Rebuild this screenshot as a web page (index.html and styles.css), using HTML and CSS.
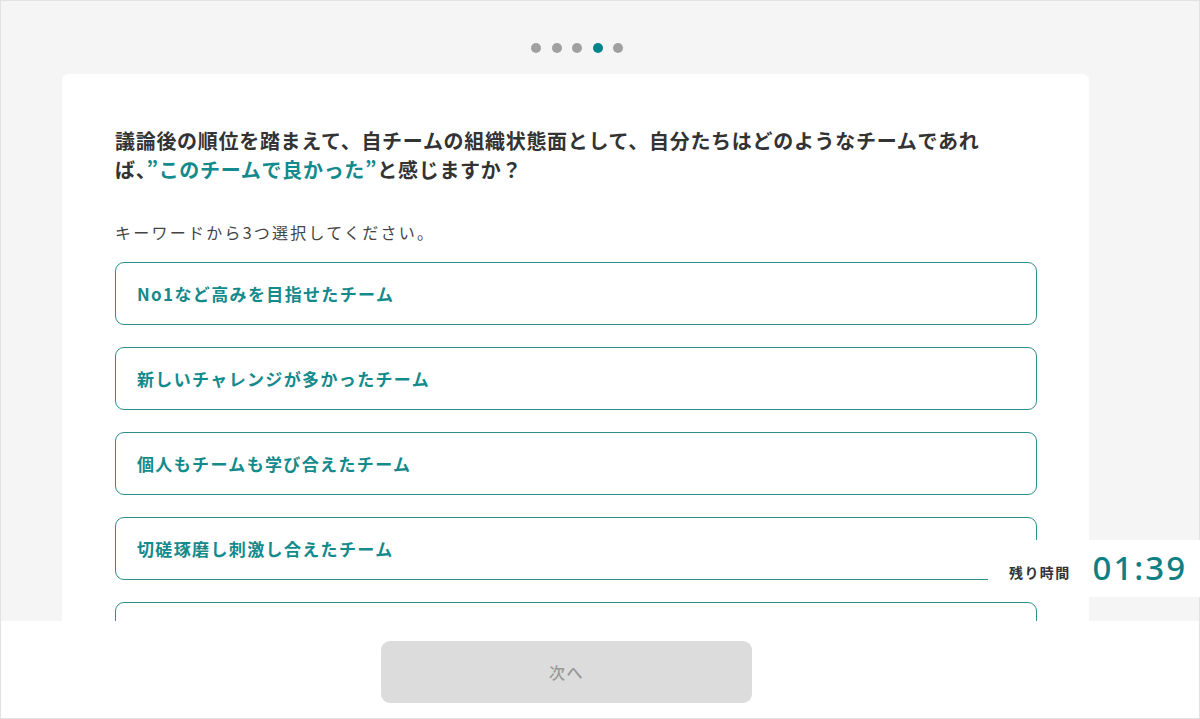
FILE: index.html
```html
<!DOCTYPE html>
<html lang="ja">
<head>
<meta charset="utf-8">
<title>質問</title>
<link rel="stylesheet" href="styles.css">
</head>
<body>
<div class="frame">
  <main class="main">
    <div class="dots">
      <span class="dot"></span>
      <span class="dot"></span>
      <span class="dot"></span>
      <span class="dot active"></span>
      <span class="dot"></span>
    </div>
    <section class="card">
      <h1 class="question">議論後の順位を踏まえて、自チームの組織状態面として、自分たちはどのようなチームであれば、<span class="accent">”このチームで良かった”</span>と感じますか？</h1>
      <p class="hint">キーワードから3つ選択してください。</p>
      <ul class="options">
        <li class="option">No1など高みを目指せたチーム</li>
        <li class="option">新しいチャレンジが多かったチーム</li>
        <li class="option">個人もチームも学び合えたチーム</li>
        <li class="option">切磋琢磨し刺激し合えたチーム</li>
        <li class="option">一体感のあるチーム</li>
      </ul>
    </section>
  </main>
  <footer class="footer">
    <button class="next" type="button">次へ</button>
  </footer>
  <div class="timer">
    <span class="timer-label">残り時間</span>
    <span class="timer-value">01:39</span>
  </div>
</div>
</body>
</html>
```
FILE: styles.css
```css
* { box-sizing: border-box; }
html, body { margin: 0; padding: 0; }
body {
  width: 1200px;
  height: 719px;
  overflow: hidden;
  font-family: "Noto Sans CJK JP", "Noto Sans", sans-serif;
  color: #333;
}
.frame {
  position: relative;
  width: 1200px;
  height: 719px;
  background: #f5f5f5;
  border: 1px solid #e2e2e2;
  display: flex;
  flex-direction: column;
}
.main {
  flex: 1;
  overflow: hidden;
}
.dots {
  display: flex;
  justify-content: flex-start;
  gap: 10.5px;
  padding: 42px 0 0 530px;
  height: 73px;
}
.dot {
  width: 10px;
  height: 10px;
  border-radius: 50%;
  background: #a0a0a0;
}
.dot.active { background: #00848a; }
.card {
  margin-left: 61px;
  width: 1027px;
  background: #fff;
  border-radius: 6px;
  padding: 52px 52px 40px 53px;
  min-height: 700px;
}
.question {
  margin: 0;
  font-size: 20px;
  font-weight: 700;
  line-height: 29px;
  letter-spacing: 0.035em;
  color: #333;
  padding-right: 48px;
}
.accent { color: #138a8c; }
.hint {
  margin: 36px 0 0;
  font-size: 16px;
  line-height: 24px;
  letter-spacing: 0.14em;
  color: #444;
}
.options {
  list-style: none;
  margin: 18px 0 0;
  padding: 0;
  display: flex;
  flex-direction: column;
  gap: 22px;
}
.option {
  height: 63px;
  border: 1px solid #2c8d8f;
  border-radius: 9px;
  display: flex;
  align-items: center;
  padding-left: 21px;
  font-size: 17px;
  font-weight: 700;
  letter-spacing: 0.08em;
  color: #138a8c;
}
.footer {
  height: 97px;
  background: #fff;
  display: flex;
  justify-content: flex-start;
  padding: 20px 0 0 380px;
}
.next {
  width: 371px;
  height: 62px;
  border: none;
  border-radius: 9px;
  background: #dcdcdc;
  color: #999;
  font-family: "Noto Sans CJK JP", "Noto Sans", sans-serif;
  font-size: 16px;
  font-weight: 500;
  letter-spacing: 0.1em;
}
.timer {
  position: absolute;
  top: 539px;
  right: -1px;
  width: 212px;
  height: 57px;
  background: #fff;
  display: flex;
  align-items: center;
  padding-left: 21px;
  gap: 22px;
}
.timer-label {
  font-size: 14px;
  font-weight: 700;
  letter-spacing: 0.1em;
  color: #333;
  padding-top: 6px;
}
.timer-value {
  font-family: "Noto Sans", sans-serif;
  font-size: 33px;
  font-weight: 500;
  color: #0e8084;
  letter-spacing: 0.06em;
  margin-top: -2px;
}
```
